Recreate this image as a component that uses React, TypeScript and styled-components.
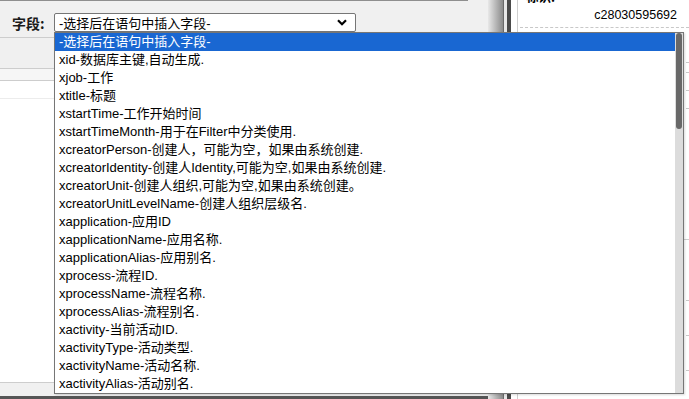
import styled, { createGlobalStyle } from 'styled-components'

const GlobalStyle = createGlobalStyle`
  html, body {
    margin: 0;
    padding: 0;
  }
  body {
    width: 689px;
    height: 399px;
    overflow: hidden;
    font-family: "Liberation Sans", "Noto Sans CJK SC", sans-serif;
    color: #000;
  }
`

const FIELDS = [
  '-选择后在语句中插入字段-',
  'xid-数据库主键,自动生成.',
  'xjob-工作',
  'xtitle-标题',
  'xstartTime-工作开始时间',
  'xstartTimeMonth-用于在Filter中分类使用.',
  'xcreatorPerson-创建人，可能为空，如果由系统创建.',
  'xcreatorIdentity-创建人Identity,可能为空,如果由系统创建.',
  'xcreatorUnit-创建人组织,可能为空,如果由系统创建。',
  'xcreatorUnitLevelName-创建人组织层级名.',
  'xapplication-应用ID',
  'xapplicationName-应用名称.',
  'xapplicationAlias-应用别名.',
  'xprocess-流程ID.',
  'xprocessName-流程名称.',
  'xprocessAlias-流程别名.',
  'xactivity-当前活动ID.',
  'xactivityType-活动类型.',
  'xactivityName-活动名称.',
  'xactivityAlias-活动别名.',
]

const Screen = styled.div`
  position: relative;
  display: flex;
  width: 689px;
  height: 399px;
  overflow: hidden;
  background: #f0f0f0;
`

const LeftPane = styled.div`
  width: 488px;
  display: flex;
  flex-direction: column;
`

const Toolbar = styled.div`
  height: 36px;
  width: 468px;
  border-top: 1px solid #8e8e8e;
  border-bottom: 1px solid #cdcdcd;
  display: flex;
  align-items: flex-start;
  padding: 12px 0 0 12px;
  box-sizing: border-box;
  height: 38px;
`

const FieldLabel = styled.span`
  font-family: "Noto Sans CJK SC", sans-serif;
  font-size: 14px;
  font-weight: 700;
  line-height: 20px;
  color: #1a1a1a;
  width: 42px;
`

const SelectBox = styled.div`
  width: 302px;
  height: 19px;
  box-sizing: border-box;
  border: 1px solid #767676;
  border-radius: 2px;
  background: #fff;
  display: flex;
  align-items: center;
  justify-content: space-between;
  padding: 0 8px 0 4px;
  font-size: 13px;
`

const Band = styled.div<{ $h: number; $bg: string; $line?: string }>`
  height: ${(p) => p.$h}px;
  background: ${(p) => p.$bg};
  border-bottom: 1px solid ${(p) => p.$line ?? '#cdcdcd'};
`

const WorkArea = styled.div`
  flex: 1;
  background: #fff;
  border-bottom: 1px solid #cdcdcd;
`

const DarkRule = styled.div`
  height: 3px;
  background: #555;
`

const Splitter = styled.div`
  width: 29px;
  display: flex;
`

const SplitGrip = styled.div`
  width: 15px;
  background: linear-gradient(to right, #e8e8e8, #8a8a8a);
`

const SplitEdge = styled.div<{ $w: number; $bg: string }>`
  width: ${(p) => p.$w}px;
  background: ${(p) => p.$bg};
`

const RightPane = styled.div`
  flex: 1;
  background: #fff;
  border-left: 1px solid #cfcfcf;
  display: flex;
  flex-direction: column;
  overflow: hidden;
`

const InfoRow = styled.div<{ $h: number; $solid?: boolean }>`
  height: ${(p) => p.$h}px;
  flex-shrink: 0;
  border-bottom: 1px ${(p) => (p.$solid ? 'solid #cfcfcf' : 'dashed #c8c8c8')};
  margin-left: 2px;
`

const IdRow = styled.div`
  height: 38px;
  margin-top: -11px;
  margin-left: 2px;
  padding: 0 12px 0 6px;
  border-bottom: 1px dashed #c8c8c8;
  display: flex;
  flex-direction: column;
  font-size: 12.5px;
  flex-shrink: 0;
`

const IdLabel = styled.span`
  font-family: "Noto Sans CJK SC", sans-serif;
  font-weight: 700;
  line-height: 16px;
`

const IdValue = styled.span`
  align-self: flex-end;
  line-height: 16px;
  margin-top: 2px;
`

const Listbox = styled.div`
  position: absolute;
  left: 54px;
  top: 32px;
  width: 630px;
  height: 362px;
  box-sizing: border-box;
  border: 1px solid #767676;
  background: #fff;
  display: flex;
  box-shadow: 1px 1px 2px rgba(0, 0, 0, 0.15);
`

const OptionList = styled.ul`
  flex: 1;
  margin: 0;
  padding: 0;
  list-style: none;
  overflow: hidden;
`

const Option = styled.li<{ $active?: boolean }>`
  height: 18px;
  line-height: 18px;
  padding-left: 4px;
  font-size: 13px;
  white-space: nowrap;
  color: ${(p) => (p.$active ? '#fff' : '#000')};
  background: ${(p) => (p.$active ? '#1967d2' : 'transparent')};
`

const ScrollTrack = styled.div`
  width: 8px;
  background: #dcdcdc;
  padding: 0 1px 0 0;
  box-sizing: border-box;
`

const ScrollThumb = styled.div`
  height: 96px;
  margin-left: 1px;
  border-radius: 3px;
  background: #686868;
`

const Chevron = () => (
  <svg width="10" height="7" viewBox="0 0 10 7">
    <path d="M1 1.2 L5 5.2 L9 1.2" fill="none" stroke="#000" strokeWidth="2.2" />
  </svg>
)

export default function App() {
  return (
    <>
      <GlobalStyle />
      <Screen>
        <LeftPane>
          <Toolbar>
            <FieldLabel>字段:</FieldLabel>
            <SelectBox>
              <span>{FIELDS[0]}</span>
              <Chevron />
            </SelectBox>
          </Toolbar>
          <Band $h={30} $bg="#f0f0f0" />
          <Band $h={11} $bg="#f6f6f6" />
          <Band $h={17} $bg="#fff" $line="#ececec" />
          <WorkArea />
          <Band $h={12} $bg="#f0f0f0" $line="#f0f0f0" />
          <DarkRule />
        </LeftPane>
        <Splitter>
          <SplitGrip />
          <SplitEdge $w={1} $bg="#6a6a6a" />
          <SplitEdge $w={3} $bg="#e8e8e8" />
          <SplitEdge $w={4} $bg="#4a4a4a" />
          <SplitEdge $w={6} $bg="#fff" />
        </Splitter>
        <RightPane>
          <IdRow>
            <IdLabel>标识:</IdLabel>
            <IdValue>c28030595692</IdValue>
          </IdRow>
          <InfoRow $h={34} />
          <InfoRow $h={9} />
          <InfoRow $h={17} />
          <InfoRow $h={17} />
          <InfoRow $h={130} $solid />
          <InfoRow $h={60} />
          <InfoRow $h={34} />
          <InfoRow $h={34} />
        </RightPane>
        <Listbox>
          <OptionList>
            {FIELDS.map((field, i) => (
              <Option key={field} $active={i === 0}>
                {field}
              </Option>
            ))}
          </OptionList>
          <ScrollTrack>
            <ScrollThumb />
          </ScrollTrack>
        </Listbox>
      </Screen>
    </>
  )
}
